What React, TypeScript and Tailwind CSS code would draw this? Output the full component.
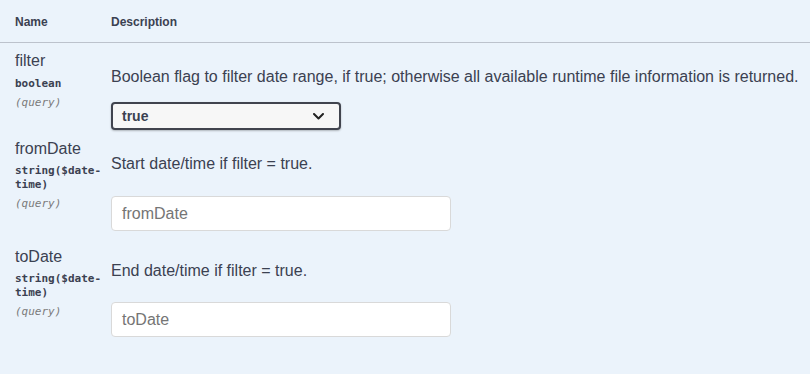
import React from "react";

const sans = { fontFamily: '"Liberation Sans", Arial, sans-serif' };

function NameCol({ name, type, extraMt }: { name: string; type: React.ReactNode; extraMt?: string }) {
  return (
    <div className="w-[96px] shrink-0 pt-[8px]">
      <div className="text-[16px] leading-[20px] text-[#3b4151]">{name}</div>
      <div
        className={"mt-[6px] text-[11px] leading-[14px] font-bold text-[#3b4151] " + (extraMt ?? "")}
        style={{ fontFamily: '"DejaVu Sans Mono", "Liberation Mono", monospace' }}
      >
        {type}
      </div>
      <div
        className="mt-[5px] text-[11px] leading-[14px] italic text-[#7a7a7a]"
        style={{ fontFamily: '"DejaVu Sans Mono", "Liberation Mono", monospace' }}
      >
        (query)
      </div>
    </div>
  );
}

export default function App() {
  return (
    <div className="w-[810px] h-[374px] bg-[#ebf3fb] text-[#3b4151] overflow-hidden" style={sans}>
      <div className="flex pl-[15px] pt-[14px] pb-[12px] border-b border-[#bcc2cc] text-[12px] leading-[16px] font-bold">
        <div className="w-[96px]">Name</div>
        <div>Description</div>
      </div>

      {/* filter */}
      <div className="flex pl-[15px]">
        <NameCol name="filter" type="boolean" />
        <div className="flex-1 pt-[24px] pb-[1px]">
          <div className="text-[16px] leading-[20px] whitespace-nowrap">
            Boolean flag to filter date range, if true; otherwise all available runtime file information is returned.
          </div>
          <div className="mt-[15px] w-[230px] h-[28px] flex items-center justify-between pl-[9px] pr-[15px] bg-[#f7f7f7] border-2 border-[#41444e] rounded-[4px] shadow-[0_1px_2px_0_rgba(0,0,0,0.25)]">
            <span className="text-[14px] font-bold text-[#3b4151]">true</span>
            <svg width="11" height="7" viewBox="0 0 11 7" fill="none">
              <polyline points="1,1 5.5,5.5 10,1" stroke="#222" strokeWidth="2" strokeLinecap="round" strokeLinejoin="round" />
            </svg>
          </div>
        </div>
      </div>

      {/* fromDate */}
      <div className="flex pl-[15px]">
        <NameCol
          name="fromDate"
          extraMt="!mt-[5px] w-[92px]"
          type={<>string($date-<br />time)</>}
        />
        <div className="flex-1 pt-[23px] pb-[8px]">
          <div className="text-[16px] leading-[20px]">Start date/time if filter = true.</div>
          <div className="mt-[22px] w-[340px] h-[35px] flex items-center px-[10px] bg-white border border-[#d9d9d9] rounded-[4px] text-[16px] text-[#757575]">
            fromDate
          </div>
        </div>
      </div>

      {/* toDate */}
      <div className="flex pl-[15px]">
        <NameCol
          name="toDate"
          extraMt="!mt-[5px] w-[92px]"
          type={<>string($date-<br />time)</>}
        />
        <div className="flex-1 pt-[22px]">
          <div className="text-[16px] leading-[20px]">End date/time if filter = true.</div>
          <div className="mt-[21px] w-[340px] h-[35px] flex items-center px-[10px] bg-white border border-[#d9d9d9] rounded-[4px] text-[16px] text-[#757575]">
            toDate
          </div>
        </div>
      </div>
    </div>
  );
}
